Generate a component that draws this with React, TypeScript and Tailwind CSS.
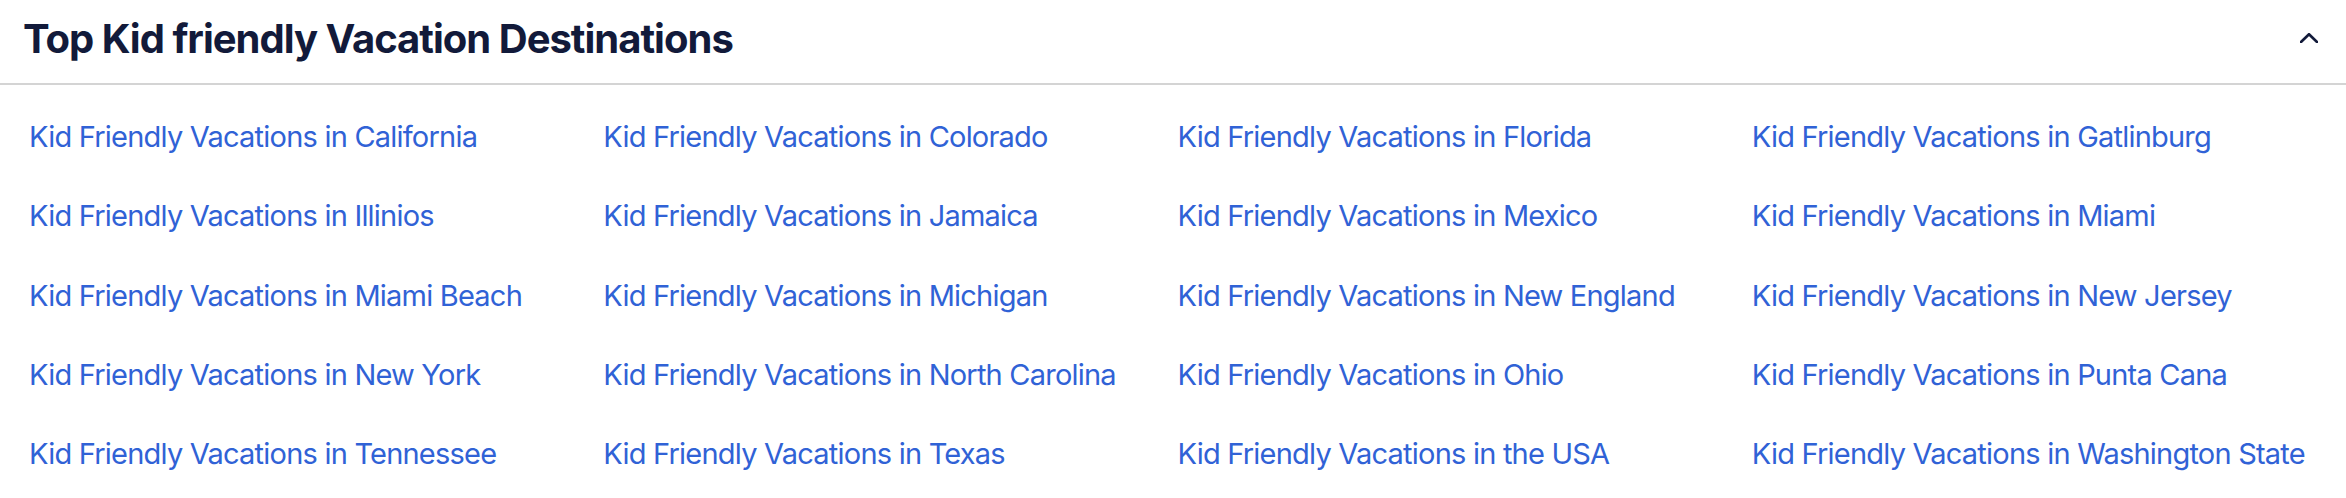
import React from "react";

const places: string[] = [
  "California",
  "Colorado",
  "Florida",
  "Gatlinburg",
  "Illinios",
  "Jamaica",
  "Mexico",
  "Miami",
  "Miami Beach",
  "Michigan",
  "New England",
  "New Jersey",
  "New York",
  "North Carolina",
  "Ohio",
  "Punta Cana",
  "Tennessee",
  "Texas",
  "the USA",
  "Washington State",
];

export default function App() {
  return (
    <div
      className="w-full min-h-[498px] bg-white"
      style={{ fontFamily: "Inter, 'Noto Sans', 'Liberation Sans', sans-serif" }}
    >
      <div className="flex items-center justify-between pl-[23px] pr-[28px] pt-[16px] pb-[21px] border-b-2 border-[#d4d4d4]">
        <h2 className="text-[40px] leading-[46px] font-bold tracking-[-0.025em] text-[#121a3a]">
          Top Kid friendly Vacation Destinations
        </h2>
        <svg width="18" height="10" viewBox="0 0 18 10" fill="none" className="-mt-[3px]">
          <polyline
            points="1,9 9,1.2 17,9"
            stroke="#121a3a"
            strokeWidth="2.6"
            strokeLinecap="round"
            strokeLinejoin="round"
          />
        </svg>
      </div>
      <div className="grid grid-cols-4 gap-y-[39.3px] pl-[29px] pr-[20px] pt-[32px] pb-[25px]">
        {places.map((p) => (
          <a
            key={p}
            href="#"
            className="text-[29px] leading-[40px] tracking-[-0.027em] text-[#3062d6] whitespace-nowrap"
          >
            Kid Friendly Vacations in {p}
          </a>
        ))}
      </div>
    </div>
  );
}
